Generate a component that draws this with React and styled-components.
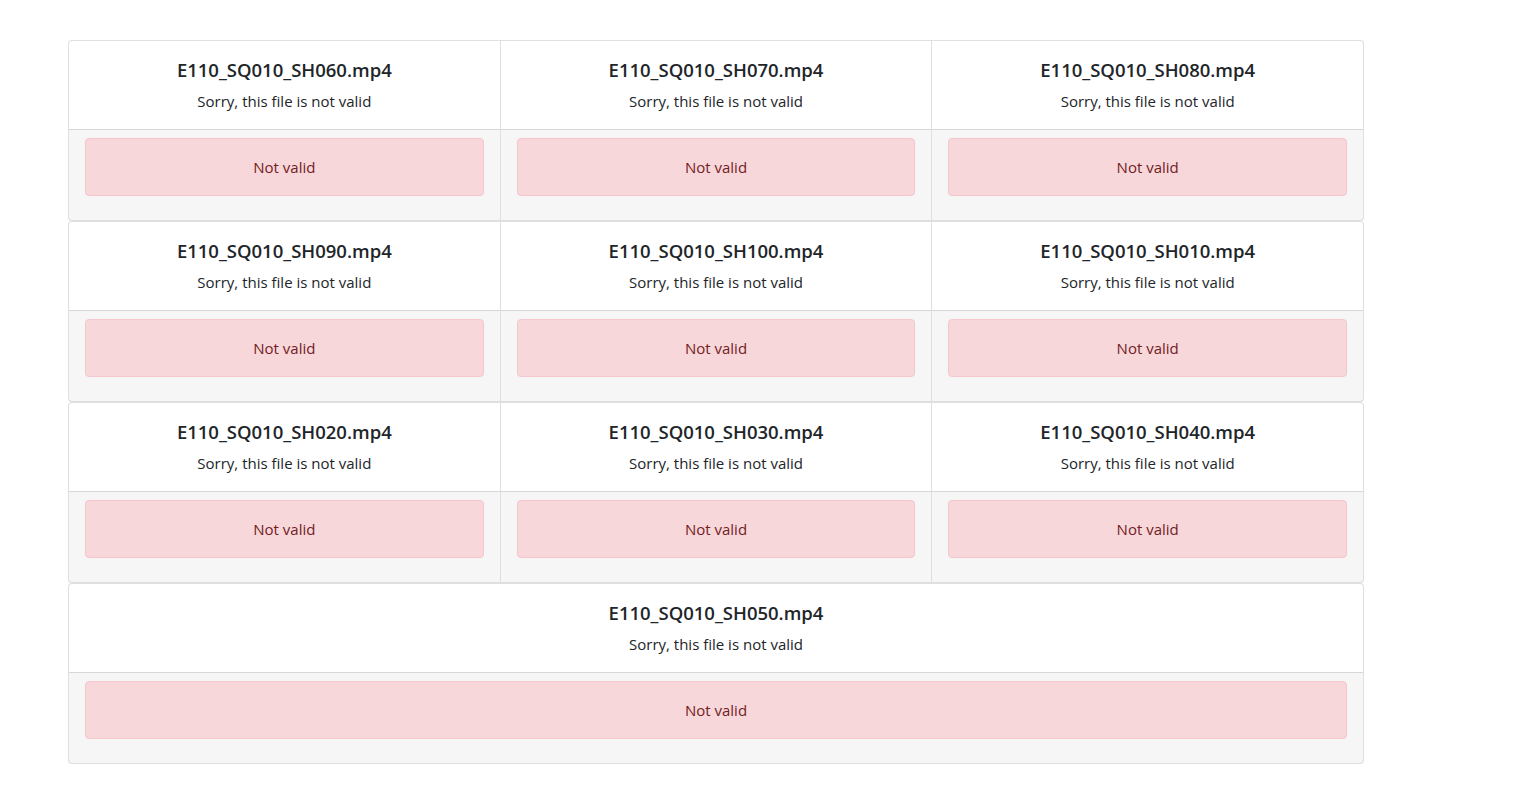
import React from 'react';
import styled, { createGlobalStyle } from 'styled-components';

const GlobalStyle = createGlobalStyle`
  body {
    margin: 0;
    background: #fff;
    font-family: "Open Sans", "Noto Sans", sans-serif;
    font-size: 15px;
    line-height: 1.5;
    color: #212529;
  }
  * { box-sizing: border-box; }
`;

const Page = styled.div`
  padding: 40px 0 0 68px;
  width: 1364px;
`;

const Group = styled.div`
  display: flex;
`;

const Card = styled.div`
  flex: 1 0 0%;
  display: flex;
  flex-direction: column;
  background: #fff;
  border: 1px solid rgba(0, 0, 0, 0.125);
  border-radius: 0;

  &:first-child {
    border-top-left-radius: 4px;
    border-bottom-left-radius: 4px;
  }
  &:last-child {
    border-top-right-radius: 4px;
    border-bottom-right-radius: 4px;
  }
  & + & {
    border-left: 0;
  }
`;

const Body = styled.div`
  padding: 17px 16px 16px;
  text-align: center;
`;

const Title = styled.h5`
  margin: 0 0 7px;
  font-size: 18.5px;
  font-weight: 600;
  line-height: 24px;
`;

const Text = styled.p`
  margin: 0;
  font-size: 15px;
  line-height: 24px;
`;

const Footer = styled.div`
  padding: 8px 16px;
  background: rgba(0, 0, 0, 0.035);
  border-top: 1px solid rgba(0, 0, 0, 0.125);
`;

const Alert = styled.div`
  margin-bottom: 16px;
  padding: 16px;
  border: 1px solid #f5c6cb;
  border-radius: 4px;
  background: #f8d7da;
  color: #721c24;
  text-align: center;
  font-size: 15px;
  line-height: 24px;
`;

const files = [
  ['E110_SQ010_SH060.mp4', 'E110_SQ010_SH070.mp4', 'E110_SQ010_SH080.mp4'],
  ['E110_SQ010_SH090.mp4', 'E110_SQ010_SH100.mp4', 'E110_SQ010_SH010.mp4'],
  ['E110_SQ010_SH020.mp4', 'E110_SQ010_SH030.mp4', 'E110_SQ010_SH040.mp4'],
  ['E110_SQ010_SH050.mp4'],
];

const FileCard = ({ name }) => (
  <Card>
    <Body>
      <Title>{name}</Title>
      <Text>Sorry, this file is not valid</Text>
    </Body>
    <Footer>
      <Alert>Not valid</Alert>
    </Footer>
  </Card>
);

const App = () => (
  <>
    <GlobalStyle />
    <Page>
      {files.map((row, i) => (
        <Group key={i}>
          {row.map((name) => (
            <FileCard key={name} name={name} />
          ))}
        </Group>
      ))}
    </Page>
  </>
);

export default App;
